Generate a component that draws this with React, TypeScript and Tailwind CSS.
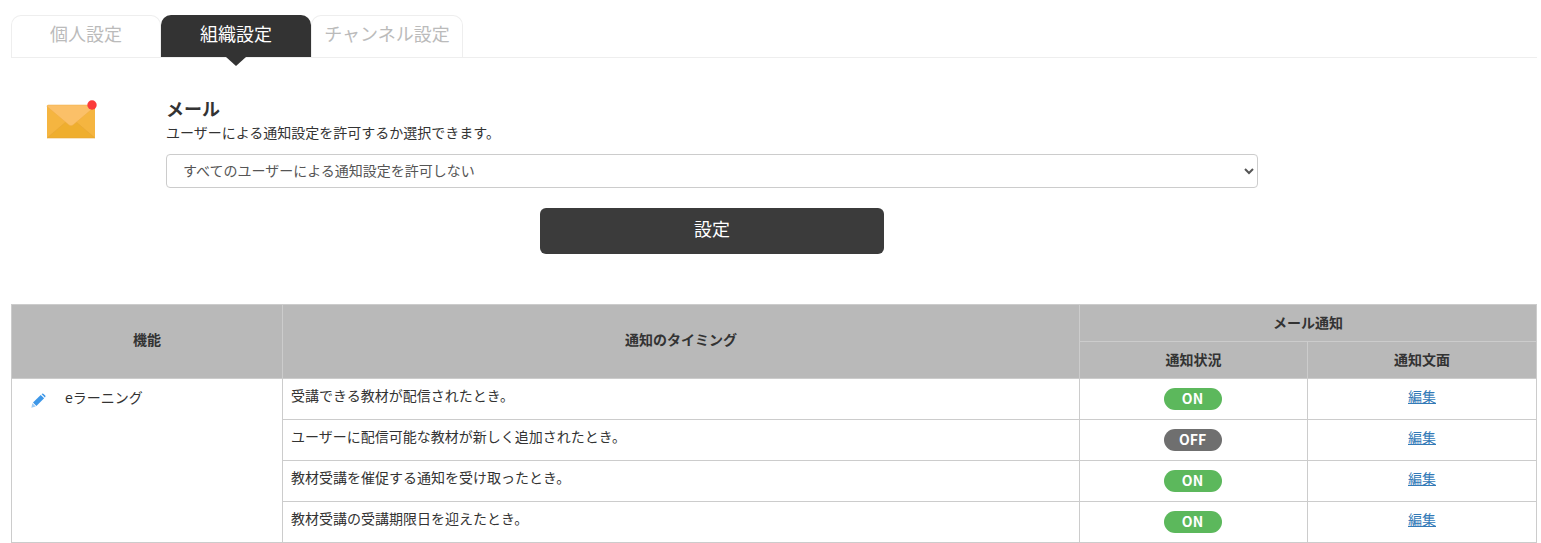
const rows = [
  { text: '受講できる教材が配信されたとき。', on: true },
  { text: 'ユーザーに配信可能な教材が新しく追加されたとき。', on: false },
  { text: '教材受講を催促する通知を受け取ったとき。', on: true },
  { text: '教材受講の受講期限日を迎えたとき。', on: true },
]

function MailIcon() {
  return (
    <svg width="52" height="42" viewBox="0 0 52 42" className="block">
      <rect x="1" y="5" width="48" height="33" rx="1.5" fill="#f5b540" />
      <path d="M1 38 L21 21 Q25 18 29 21 L49 38 L2.5 38 Z" fill="#efae2e" stroke="#e5a638" strokeWidth="0.6" />
      <path d="M1 6.5 Q1 5 2.5 5 L47.5 5 Q49 5 49 6.5 L27 25 Q25 26.5 23 25 Z" fill="#fbc068" stroke="#eeac45" strokeWidth="0.5" />
      <circle cx="46" cy="5" r="4.7" fill="#fb3b3b" />
    </svg>
  )
}

function PencilIcon() {
  return (
    <svg width="15" height="15" viewBox="0 0 15 15" className="block">
      <path d="M0.3 14.7 L1.4 10.3 L4.7 13.6 Z" fill="#9cc9f2" />
      <path d="M2 9.6 L9.7 1.9 L13.1 5.3 L5.4 13 Z" fill="#3d97e8" />
      <path d="M10.6 1 Q11.6 0.1 12.6 0.9 L14.1 2.4 Q14.9 3.4 14 4.4 L13.9 4.5 L10.5 1.1 Z" fill="#3d97e8" />
    </svg>
  )
}

export default function App() {
  return (
    <div className="bg-white h-[543px] overflow-hidden pt-[15px] pl-[11px] pr-1 text-[#333] font-['Noto_Sans_CJK_JP','Liberation_Sans',sans-serif]">
      <div className="flex h-[43px] border-b border-[#eee]">
        <div className="w-[150px] h-[42px] pb-[6px] flex items-center justify-center bg-white border border-b-0 border-[#eee] rounded-t-[10px] text-[18px] text-[#bbb]">個人設定</div>
        <div className="relative w-[150px] h-[42px] pb-[6px] flex items-center justify-center bg-[#333] rounded-t-[10px] text-[18px] text-white">
          組織設定
          <span className="absolute left-[65px] top-[42px] border-x-[10px] border-t-[9px] border-x-transparent border-t-[#333]" />
        </div>
        <div className="w-[152px] h-[42px] pb-[6px] flex items-center justify-center bg-white border border-b-0 border-[#eee] rounded-t-[10px] text-[18px] text-[#bbb]">チャンネル設定</div>
      </div>

      <div className="flex mt-[41px]">
        <div className="w-[155px] shrink-0 pl-[35px] pt-[1px]">
          <MailIcon />
        </div>
        <div className="w-[1092px]">
          <h2 className="text-[18px] leading-[25px] font-bold -mt-[3px]">メール</h2>
          <p className="text-[14px] leading-[20px] mt-[1px] text-[#333]">ユーザーによる通知設定を許可するか選択できます。</p>
          <select className="block w-full h-[34px] mt-[12px] pl-[12px] pr-2 pb-[2px] bg-white border border-[#ccc] rounded text-[14px] text-[#555] font-['Noto_Sans_CJK_JP','Liberation_Sans',sans-serif]">
            <option>すべてのユーザーによる通知設定を許可しない</option>
          </select>
          <div className="flex justify-center mt-[20px]">
            <button className="w-[344px] h-[46px] pb-[6px] bg-[#3b3b3b] rounded-md text-white text-[18px]">設定</button>
          </div>
        </div>
      </div>

      <table className="mt-[50px] w-[1525px] border-collapse table-fixed border border-[#ccc] text-[14px]">
        <colgroup>
          <col className="w-[271px]" />
          <col className="w-[797px]" />
          <col className="w-[228px]" />
          <col className="w-[229px]" />
        </colgroup>
        <thead>
          <tr className="h-[37px] bg-[#b9b9b9]">
            <th rowSpan={2} className="border border-[#ccc] font-bold pb-[4px]">機能</th>
            <th rowSpan={2} className="border border-[#ccc] font-bold pb-[4px]">通知のタイミング</th>
            <th colSpan={2} className="border border-[#ccc] font-bold pb-[2px]">メール通知</th>
          </tr>
          <tr className="h-[37px] bg-[#b9b9b9]">
            <th className="border border-[#ccc] font-bold pb-[2px]">通知状況</th>
            <th className="border border-[#ccc] font-bold pb-[2px]">通知文面</th>
          </tr>
        </thead>
        <tbody>
          {rows.map((row, idx) => (
            <tr key={idx} className="h-[41px]">
              {idx === 0 && (
                <td rowSpan={4} className="border border-[#ccc] align-top">
                  <div className="flex items-start pl-[19px] pt-[8px]">
                    <span className="mt-[6px]">
                      <PencilIcon />
                    </span>
                    <span className="ml-[19px] text-[14px] leading-[20px]">eラーニング</span>
                  </div>
                </td>
              )}
              <td className="border border-[#ccc] align-top px-2 pt-[7px] leading-[18px]">{row.text}</td>
              <td className="border border-[#ccc] text-center pb-[2px]">
                <span className={`inline-flex items-center justify-center w-[58px] h-[22px] mr-[2px] rounded-[11px] align-middle text-white text-[14px] font-bold ${row.on ? 'bg-[#5cb85c]' : 'bg-[#6f6f6f]'}`}>
                  {row.on ? 'ON' : 'OFF'}
                </span>
              </td>
              <td className="border border-[#ccc] text-center">
                <a href="#" className="text-[#337ab7] underline text-[14px] leading-[20px] relative -top-[3px]">編集</a>
              </td>
            </tr>
          ))}
        </tbody>
      </table>
    </div>
  )
}
